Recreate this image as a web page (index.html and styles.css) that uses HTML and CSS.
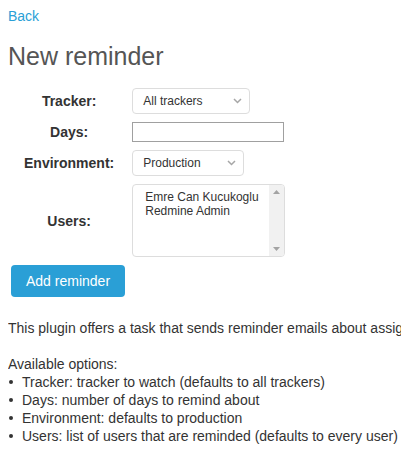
FILE: index.html
```html
<!DOCTYPE html>
<html lang="en">
<head>
<meta charset="utf-8">
<title>New reminder</title>
<link rel="stylesheet" href="styles.css">
</head>
<body>
<a class="back" href="#">Back</a>
<h2 class="title">New reminder</h2>
<form class="reminder-form">
  <table class="form-table">
    <tr>
      <th>Tracker:</th>
      <td>
        <div class="select select-tracker">
          <span>All trackers</span>
          <svg class="chevron" width="9" height="6" viewBox="0 0 9 6"><path d="M1 1 L4.5 4.5 L8 1" fill="none" stroke="#a6a6a6" stroke-width="1.5"/></svg>
        </div>
      </td>
    </tr>
    <tr>
      <th>Days:</th>
      <td><div class="text-input"></div></td>
    </tr>
    <tr>
      <th>Environment:</th>
      <td>
        <div class="select select-env">
          <span>Production</span>
          <svg class="chevron" width="9" height="6" viewBox="0 0 9 6"><path d="M1 1 L4.5 4.5 L8 1" fill="none" stroke="#a6a6a6" stroke-width="1.5"/></svg>
        </div>
      </td>
    </tr>
    <tr>
      <th>Users:</th>
      <td>
        <div class="listbox">
          <div class="options">
            <div class="option">Emre Can Kucukoglu</div>
            <div class="option">Redmine Admin</div>
          </div>
          <div class="scrollbar">
            <svg width="7" height="4" viewBox="0 0 7 4"><path d="M0 4 L3.5 0 L7 4 Z" fill="#a3a3a3"/></svg>
            <svg width="7" height="4" viewBox="0 0 7 4"><path d="M0 0 L3.5 4 L7 0 Z" fill="#a3a3a3"/></svg>
          </div>
        </div>
      </td>
    </tr>
  </table>
  <button class="btn" type="button">Add reminder</button>
</form>
<p class="intro">This plugin offers a task that sends reminder emails about assigned issues that are due in the given number of days.</p>
<p class="options-title">Available options:</p>
<ul class="option-list">
  <li>Tracker: tracker to watch (defaults to all trackers)</li>
  <li>Days: number of days to remind about</li>
  <li>Environment: defaults to production</li>
  <li>Users: list of users that are reminded (defaults to every user)</li>
</ul>
</body>
</html>
```

FILE: styles.css
```css
html {
  overflow: hidden;
}
body {
  margin: 8px 8px 0;
  font-family: "Liberation Sans", Arial, sans-serif;
  font-size: 14px;
  line-height: 16px;
  color: #333;
  background: #fff;
}
.back {
  color: #2a9fd6;
  text-decoration: none;
}
.title {
  margin: 18px 0 13px;
  font-size: 25px;
  line-height: 29px;
  font-weight: normal;
  color: #555;
}
.reminder-form {
  margin: 0;
}
.form-table {
  border-collapse: separate;
  border-spacing: 0;
}
.form-table th {
  padding: 4px 9px 4px 16px;
  text-align: center;
  vertical-align: middle;
  font-weight: bold;
  color: #333;
}
.form-table td {
  padding: 4px 9px 4px 9px;
  vertical-align: middle;
}
.select {
  box-sizing: border-box;
  height: 26px;
  display: flex;
  align-items: center;
  justify-content: space-between;
  padding: 0 7px 0 10px;
  border: 1px solid #ddd;
  border-radius: 4px;
  background: #fff;
  font-size: 12px;
  color: #333;
}
.select-tracker {
  width: 118px;
}
.select-env {
  width: 112px;
}
.chevron {
  display: block;
}
.text-input {
  box-sizing: border-box;
  width: 152px;
  height: 20px;
  border: 1px solid #a0a0a0;
  background: #fff;
}
.listbox {
  box-sizing: border-box;
  width: 153px;
  height: 73px;
  display: flex;
  border: 1px solid #ddd;
  border-radius: 4px;
  background: #fff;
  overflow: hidden;
}
.options {
  flex: 1;
  padding: 5px 0 0 12px;
  font-size: 12px;
  line-height: 14px;
  color: #333;
}
.scrollbar {
  width: 15px;
  background: #f1f1f1;
  display: flex;
  flex-direction: column;
  align-items: center;
  justify-content: space-between;
  padding: 5px 0 5px;
  box-sizing: border-box;
}
.scrollbar svg {
  display: block;
}
.btn {
  margin: 4px 0 0 3px;
  padding: 8px 15px;
  border: none;
  border-radius: 4px;
  background: #2a9fd6;
  color: #fff;
  font-family: "Liberation Sans", Arial, sans-serif;
  font-size: 14px;
  line-height: 16px;
  cursor: pointer;
}
.intro {
  margin: 22px 0 18px;
  line-height: 18px;
  white-space: nowrap;
}
.options-title {
  margin: 0;
  line-height: 18px;
}
.option-list {
  margin: 0;
  padding: 0;
  list-style: none;
}
.option-list li {
  line-height: 18px;
  white-space: nowrap;
}
.option-list li::before {
  content: "";
  display: inline-block;
  width: 4px;
  height: 4px;
  border-radius: 50%;
  background: #333;
  margin: 0 9px 0 1px;
  vertical-align: 3px;
}
```
